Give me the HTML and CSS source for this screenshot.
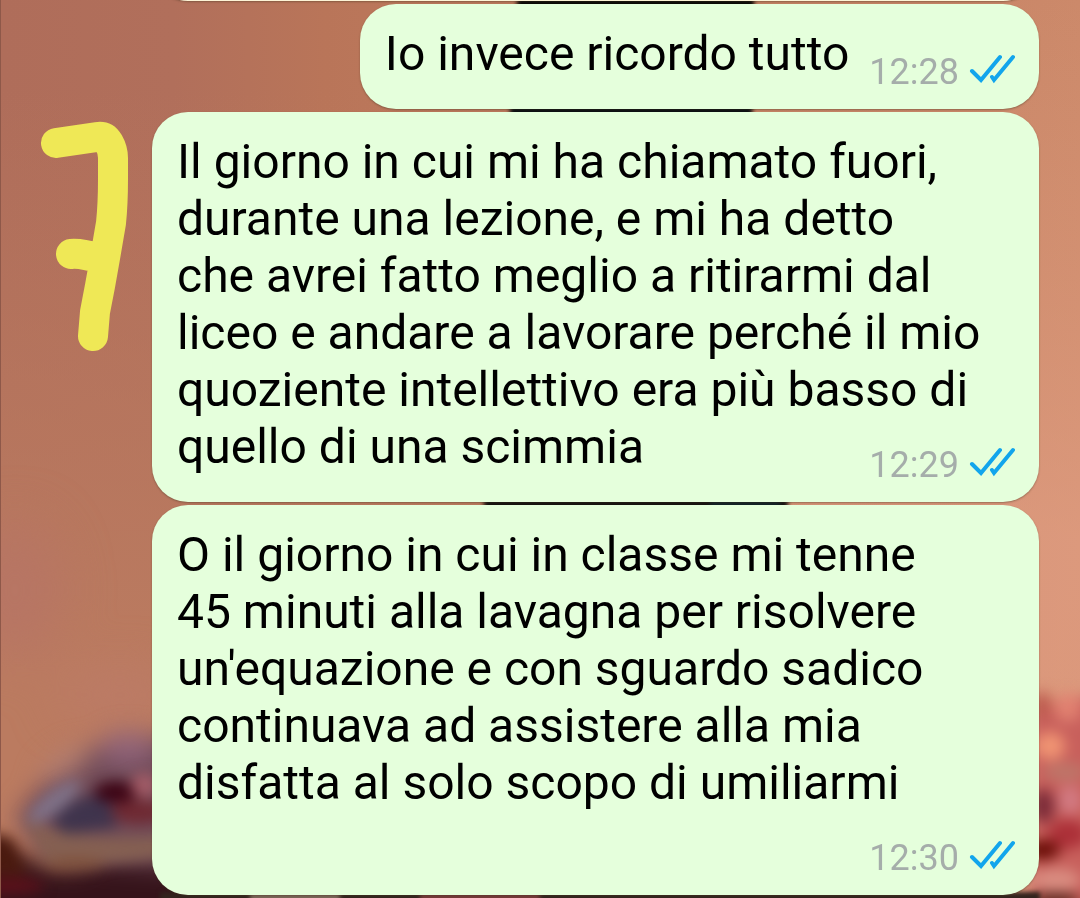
FILE: index.html
```html
<!DOCTYPE html>
<html lang="it">
<head>
<meta charset="utf-8">
<meta name="viewport" content="width=device-width, initial-scale=1">
<title>Chat</title>
<link rel="stylesheet" href="styles.css">
</head>
<body>
<svg class="wallpaper" viewBox="0 0 1080 898" preserveAspectRatio="none" aria-hidden="true">
  <defs>
    <linearGradient id="base" x1="0" y1="0" x2="1" y2="0">
      <stop offset="0" stop-color="#af6d5a"/>
      <stop offset=".16" stop-color="#b16f5b"/>
      <stop offset=".3" stop-color="#b97559"/>
      <stop offset="1" stop-color="#cc896a"/>
    </linearGradient>
    <linearGradient id="glow" x1="0" y1="0" x2="0" y2="1">
      <stop offset="0" stop-color="#e0a080" stop-opacity="0"/>
      <stop offset=".6" stop-color="#e9a68c" stop-opacity=".55"/>
      <stop offset="1" stop-color="#e9a68c" stop-opacity=".5"/>
    </linearGradient>
    <linearGradient id="warm" x1="0" y1="0" x2="0" y2="1">
      <stop offset=".1" stop-color="#bb7b60" stop-opacity="0"/>
      <stop offset=".75" stop-color="#bb7b60"/>
    </linearGradient>
    <filter id="b2" x="-50%" y="-50%" width="200%" height="200%" color-interpolation-filters="sRGB"><feGaussianBlur stdDeviation="2"/></filter>
    <filter id="b7" x="-50%" y="-50%" width="200%" height="200%" color-interpolation-filters="sRGB"><feGaussianBlur stdDeviation="7"/></filter>
    <filter id="b14" x="-50%" y="-50%" width="200%" height="200%" color-interpolation-filters="sRGB"><feGaussianBlur stdDeviation="12"/></filter>
    <filter id="b30" x="-50%" y="-50%" width="200%" height="200%" color-interpolation-filters="sRGB"><feGaussianBlur stdDeviation="25"/></filter>
  </defs>
  <rect width="1080" height="898" fill="url(#base)"/>
  <rect width="700" height="898" fill="url(#warm)"/>
  <rect x="700" width="380" height="898" fill="url(#glow)"/>
  <g filter="url(#b30)">
    <ellipse cx="15" cy="590" rx="45" ry="70" fill="#b67465" opacity=".8"/>
    <ellipse cx="120" cy="695" rx="60" ry="22" fill="#bc7b68"/>
  </g>
  <g filter="url(#b14)">
    <path d="M-30 850 20 855 60 868 200 850 200 940-30 940Z" fill="#35131a"/>
    <path d="M15 820Q60 755 115 738L200 735 200 870 60 860Z" fill="#704b58"/>
    <ellipse cx="128" cy="749" rx="28" ry="17" fill="#8e6278"/>
    <ellipse cx="65" cy="765" rx="30" ry="12" transform="rotate(-35 65 765)" fill="#b07c70"/>
  </g>
  <g filter="url(#b7)">
    <path d="M-20 832 12 838 28 875-20 875Z" fill="#4a1a0f"/>
    <path d="M22 815Q50 842 170 836L170 856Q80 870 45 862Z" fill="#856052"/>
    <ellipse cx="75" cy="864" rx="30" ry="6" fill="#80523a"/>
    <path d="M52 822Q72 793 108 795L118 827 66 834Z" fill="#3f344d"/>
    <ellipse cx="54" cy="802" rx="32" ry="10" transform="rotate(-38 54 802)" fill="#807389"/>
    <ellipse cx="116" cy="792" rx="22" ry="11" fill="#3c0414"/>
    <ellipse cx="144" cy="785" rx="13" ry="12" fill="#a45c67"/>
    <ellipse cx="139" cy="812" rx="28" ry="12" fill="#6f2932"/>
    <ellipse cx="8" cy="886" rx="36" ry="8" fill="#5d111b"/>
    <path d="M1030 700Q1050 715 1100 690V920H1030Z" fill="#c8605c"/>
    <ellipse cx="1042" cy="705" rx="10" ry="13" fill="#bd5c4f"/>
    <ellipse cx="1068" cy="708" rx="14" ry="14" fill="#e08070"/>
    <ellipse cx="1050" cy="746" rx="15" ry="14" fill="#f09473"/>
    <ellipse cx="1065" cy="772" rx="22" ry="9" fill="#bd7669"/>
    <ellipse cx="1043" cy="806" rx="12" ry="17" fill="#7b2b38"/>
    <ellipse cx="1070" cy="800" rx="12" ry="15" fill="#d27a82"/>
    <ellipse cx="1068" cy="834" rx="20" ry="15" fill="#ac3038"/>
    <ellipse cx="1042" cy="850" rx="18" ry="10" fill="#680c06"/>
    <ellipse cx="1056" cy="880" rx="25" ry="12" fill="#d98c80"/>
    <ellipse cx="1055" cy="900" rx="25" ry="6" fill="#40180f"/>
  </g>
  <g filter="url(#b2)">
    <path d="M518-5H754V60H510Z" fill="#0c0908"/>
    <path d="M510 60H754L752 120H510Z" fill="#0c1014"/>
    <path d="M484 480H788V530H484Z" fill="#161311"/>
    <path d="M710 480H780V530H710Z" fill="#122227"/>
    <path d="M160 892H1040V905H160Z" fill="#33241e"/>
    <path d="M250 892H340V905H250Z" fill="#7b6558"/>
    <path d="M420 892H540V905H420Z" fill="#753a39"/>
  </g>
  <rect width="1" height="898" fill="#8e5849"/>
</svg>

<svg class="mark" viewBox="0 0 100 240" role="img" aria-label="7">
  <path d="M21 29 62 23C69 22 71 24 74 29Q78 36 78 44V65Q78 90 76 109L70 144 65 172 60 198 58 222M36 140Q46 139 66 145"/>
</svg>

<main class="chat">
  <div class="bubble previous"></div>

  <article class="bubble short">
    <p class="text">Io invece ricordo tutto</p>
    <div class="meta">
      <time>12:28</time>
      <svg class="ticks" viewBox="0 0 46 30" role="img" aria-label="Letto"><path d="M3 17 12 26 31 3M23 23 25 26 44 3"/></svg>
    </div>
  </article>

  <article class="bubble">
    <p class="text">Il giorno in cui mi ha chiamato fuori,<br>durante una lezione, e mi ha detto<br>che avrei fatto meglio a ritirarmi dal<br>liceo e andare a lavorare perché il mio<br>quoziente intellettivo era più basso di<br>quello di una scimmia</p>
    <div class="meta">
      <time>12:29</time>
      <svg class="ticks" viewBox="0 0 46 30" role="img" aria-label="Letto"><path d="M3 17 12 26 31 3M23 23 25 26 44 3"/></svg>
    </div>
  </article>

  <article class="bubble stacked">
    <p class="text">O il giorno in cui in classe mi tenne<br>45 minuti alla lavagna per risolvere<br>un'equazione e con sguardo sadico<br>continuava ad assistere alla mia<br>disfatta al solo scopo di umiliarmi</p>
    <div class="meta">
      <time>12:30</time>
      <svg class="ticks" viewBox="0 0 46 30" role="img" aria-label="Letto"><path d="M3 17 12 26 31 3M23 23 25 26 44 3"/></svg>
    </div>
  </article>
</main>
</body>
</html>
```
FILE: styles.css
```css
* {
  box-sizing: border-box;
}

body {
  position: relative;
  min-height: 100vh;
  margin: 0;
  overflow: hidden;
  background: #b87660;
  font-family: Roboto, "Liberation Sans", sans-serif;
}

.wallpaper {
  position: absolute;
  inset: 0;
  width: 100%;
  height: 100%;
}

.mark {
  position: absolute;
  left: 35px;
  top: 114px;
  width: 100px;
  height: 240px;
}

.mark path {
  fill: none;
  stroke: #efe856;
  stroke-width: 30;
  stroke-linecap: round;
  stroke-linejoin: round;
}

.chat {
  position: relative;
  display: flex;
  flex-direction: column;
  gap: 3px;
  padding: 0 41px 3px 152px;
}

.bubble {
  display: grid;
  padding: 21px 24px 16px 25px;
  border-radius: 36px;
  background: #e5ffdc;
  box-shadow: 0 1px 2px rgba(60, 50, 30, 0.4);
}

.previous {
  height: 72px;
  margin-top: -71px;
  background: #fdf3d6;
}

.short {
  align-self: flex-end;
  grid-template-columns: auto auto;
  column-gap: 20px;
}

.text {
  grid-area: 1 / 1;
  margin: 0;
  padding-bottom: 11px;
  color: #000;
  font-size: 48px;
  line-height: 57px;
  white-space: nowrap;
}

.meta {
  grid-area: 1 / 1;
  align-self: end;
  justify-self: end;
  display: flex;
  align-items: center;
  gap: 10px;
  color: #a5adaa;
  font-size: 36px;
  line-height: 42px;
}

.short .meta {
  grid-area: 1 / 2;
}

.stacked .meta {
  grid-area: 2 / 1;
  padding-top: 15px;
}

.ticks {
  width: 46px;
  height: 30px;
  margin-bottom: 6px;
}

.ticks path {
  fill: none;
  stroke: #12a5ec;
  stroke-width: 4;
  stroke-linecap: round;
}
```
